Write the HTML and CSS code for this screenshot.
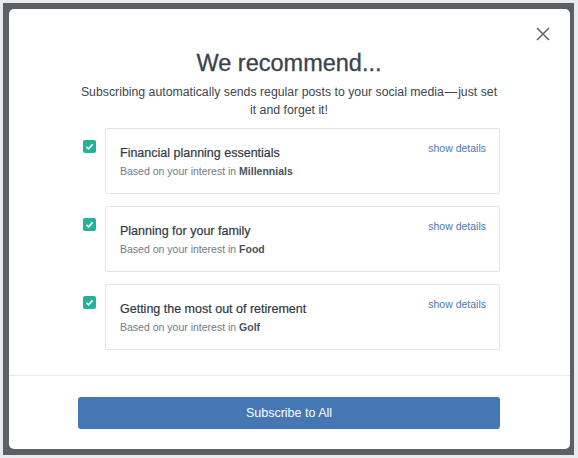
FILE: index.html
```html
<!DOCTYPE html>
<html>
<head>
  <title>We recommend</title>
  <link rel="stylesheet" href="styles.css">
</head>
<body>
  <div class="backdrop">
    <div class="modal">
      <button class="close" aria-label="Close">
        <svg width="14" height="14" viewBox="0 0 14 14">
          <path d="M1 1 L13 13 M13 1 L1 13" stroke="#5d6670" stroke-width="1.6" fill="none"/>
        </svg>
      </button>

      <div class="content">
        <h1 class="title">We recommend...</h1>
        <p class="intro">Subscribing automatically sends regular posts to your social media<span class="dash">—</span>just set<br>it and forget it!</p>

        <div class="list">
          <div class="row">
            <span class="check">
              <svg width="9" height="9" viewBox="0 0 9 9"><path d="M1.5 4.8 L3.6 6.8 L7.6 2.4" stroke="#fff" stroke-width="1.7" fill="none"/></svg>
            </span>
            <div class="card">
              <div class="card-text">
                <div class="card-title">Financial planning essentials</div>
                <div class="card-sub">Based on your interest in <b>Millennials</b></div>
              </div>
              <a class="details">show details</a>
            </div>
          </div>
          <div class="row">
            <span class="check">
              <svg width="9" height="9" viewBox="0 0 9 9"><path d="M1.5 4.8 L3.6 6.8 L7.6 2.4" stroke="#fff" stroke-width="1.7" fill="none"/></svg>
            </span>
            <div class="card">
              <div class="card-text">
                <div class="card-title">Planning for your family</div>
                <div class="card-sub">Based on your interest in <b>Food</b></div>
              </div>
              <a class="details">show details</a>
            </div>
          </div>
          <div class="row">
            <span class="check">
              <svg width="9" height="9" viewBox="0 0 9 9"><path d="M1.5 4.8 L3.6 6.8 L7.6 2.4" stroke="#fff" stroke-width="1.7" fill="none"/></svg>
            </span>
            <div class="card">
              <div class="card-text">
                <div class="card-title">Getting the most out of retirement</div>
                <div class="card-sub">Based on your interest in <b>Golf</b></div>
              </div>
              <a class="details">show details</a>
            </div>
          </div>
        </div>
      </div>

      <div class="footer">
        <button class="subscribe">Subscribe to All</button>
      </div>
    </div>
  </div>
</body>
</html>
```

FILE: styles.css
```css
* {
  box-sizing: border-box;
  margin: 0;
  padding: 0;
}

body {
  font-family: "Liberation Sans", Arial, sans-serif;
  background-color: #e9eaeb;
  width: 578px;
  height: 458px;
  padding: 3px 4px 3px 3px;
}

.backdrop {
  background-color: #5c5f63;
  padding: 6px 4px 6px 6px;
  height: 452px;
}

.modal {
  position: relative;
  background-color: #fff;
  border-radius: 5px;
  height: 440px;
  display: flex;
  flex-direction: column;
}

.close {
  position: absolute;
  top: 18px;
  right: 20px;
  border: none;
  background: none;
  cursor: pointer;
  width: 14px;
  height: 14px;
}

.close svg {
  display: block;
}

.content {
  padding: 39px 70px 0 69px;
  flex: 1;
}

.title {
  font-size: 23.5px;
  line-height: 30px;
  font-weight: normal;
  color: #3a4450;
  text-align: center;
  -webkit-text-stroke: 0.3px #3a4450;
}

.intro {
  font-size: 12.3px;
  line-height: 18px;
  color: #3e4650;
  text-align: center;
  margin: 5px -12px 0;
  white-space: nowrap;
}

.dash {
  margin: 0 1px;
}

.list {
  margin-top: 9px;
  display: flex;
  flex-direction: column;
  gap: 12px;
}

.row {
  display: flex;
  align-items: flex-start;
}

.check {
  width: 13px;
  height: 13px;
  margin: 12px 9px 0 5px;
  border-radius: 2px;
  background-color: #23b39a;
  display: flex;
  align-items: center;
  justify-content: center;
}

.check svg {
  display: block;
}

.card {
  flex: 1;
  height: 66px;
  border: 1px solid #e3e5e7;
  border-radius: 2px;
  display: flex;
  justify-content: space-between;
  padding: 12px 13px 0 14px;
}

.card-title {
  font-size: 12.5px;
  line-height: 18px;
  color: #2f3945;
  margin-top: 3px;
  -webkit-text-stroke: 0.2px #2f3945;
}

.card-sub {
  font-size: 10.5px;
  line-height: 15px;
  color: #707a85;
  margin-top: 2px;
}

.card-sub b {
  color: #4a535d;
}

.details {
  font-size: 10.5px;
  line-height: 14px;
  color: #4a79b7;
  cursor: pointer;
}

.footer {
  border-top: 1px solid #ebecee;
  padding: 21px 70px 20px 69px;
}

.subscribe {
  width: 100%;
  height: 32px;
  border: none;
  border-radius: 3px;
  background-color: #4677b5;
  color: #fff;
  font-family: "Liberation Sans", Arial, sans-serif;
  font-size: 12.5px;
  cursor: pointer;
}
```
